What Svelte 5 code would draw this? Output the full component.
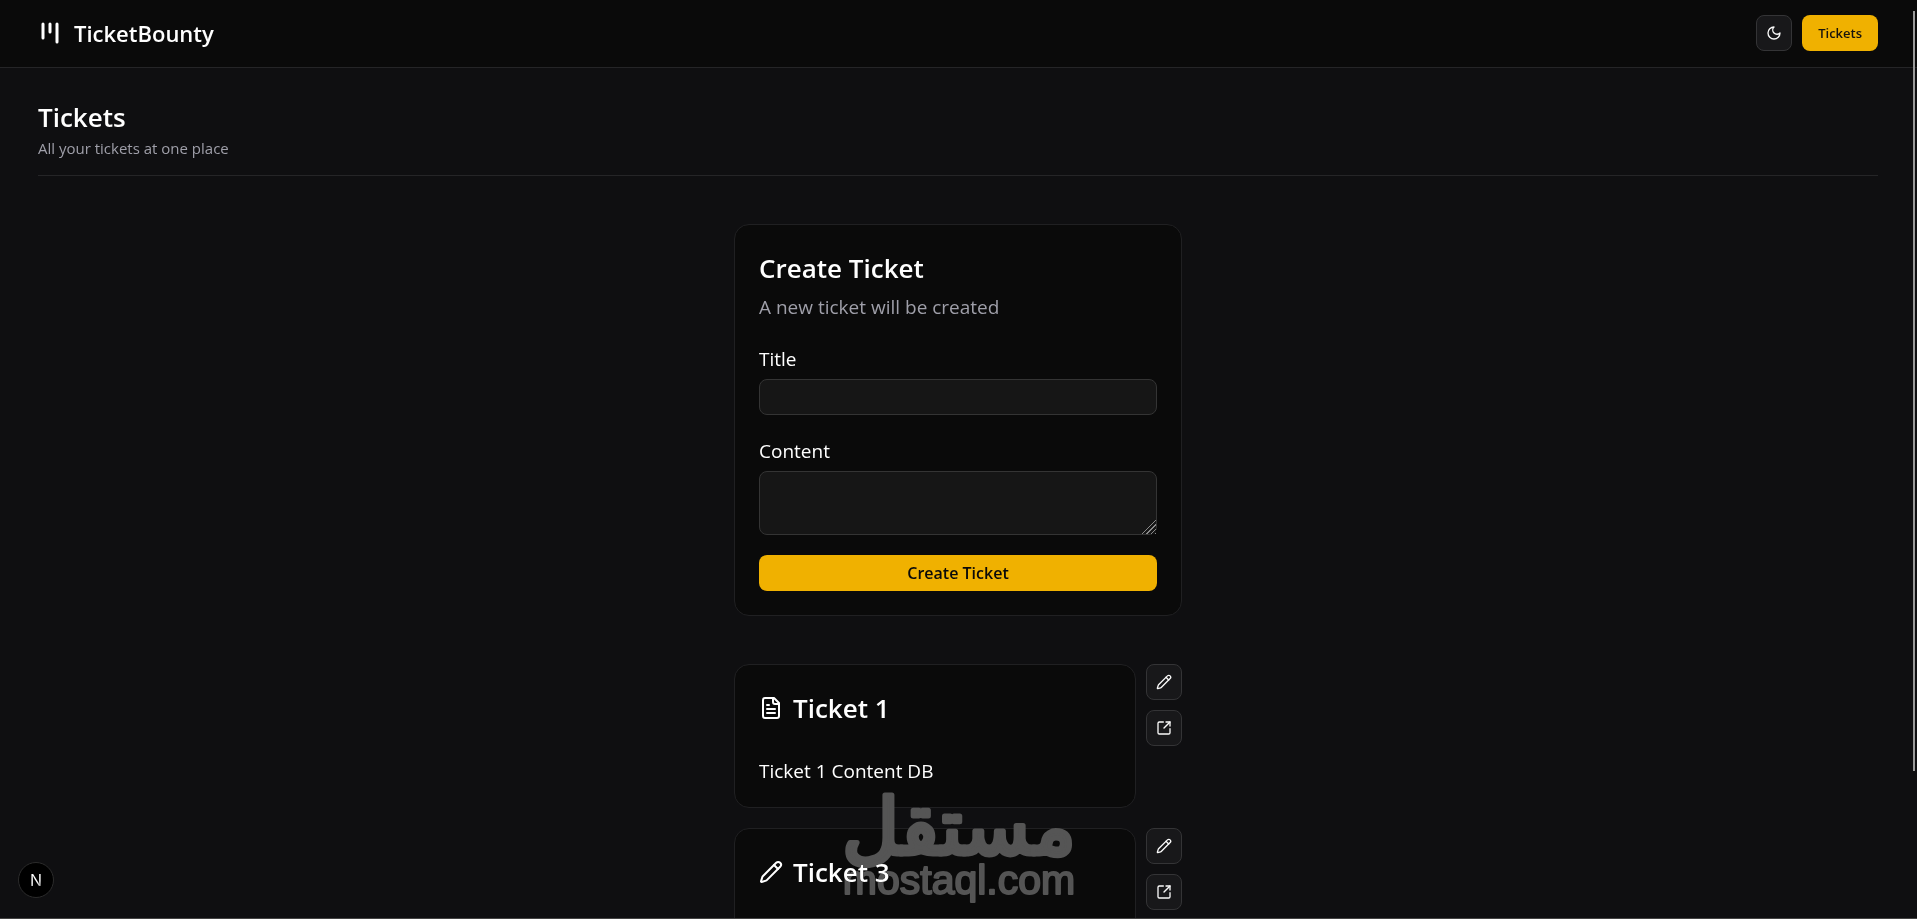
<script lang="ts">
  type Status = "OPEN" | "IN_PROGRESS";

  type Ticket = {
    id: number;
    title: string;
    content: string;
    status: Status;
  };

  const tickets: Ticket[] = [
    { id: 1, title: "Ticket 1", content: "Ticket 1 Content DB", status: "OPEN" },
    { id: 3, title: "Ticket 3", content: "", status: "IN_PROGRESS" },
  ];

  let title = $state("");
  let content = $state("");
</script>

{#snippet pencil()}
  <svg class="icon" viewBox="0 0 24 24" aria-hidden="true">
    <path
      d="M21.174 6.812a1 1 0 0 0-3.986-3.987L3.842 16.174a2 2 0 0 0-.5.83l-1.321 4.352a.5.5 0 0 0 .623.622l4.353-1.32a2 2 0 0 0 .83-.497z"
    />
    <path d="m15 5 4 4" />
  </svg>
{/snippet}

{#snippet fileText()}
  <svg class="icon" viewBox="0 0 24 24" aria-hidden="true">
    <path d="M15 2H6a2 2 0 0 0-2 2v16a2 2 0 0 0 2 2h12a2 2 0 0 0 2-2V7Z" />
    <path d="M14 2v4a2 2 0 0 0 2 2h4" />
    <path d="M10 9H8" />
    <path d="M16 13H8" />
    <path d="M16 17H8" />
  </svg>
{/snippet}

<div class="app">
  <header class="topbar">
    <a class="brand" href="/">
      <svg class="icon" viewBox="0 0 24 24" aria-hidden="true">
        <path d="M5 3v14" />
        <path d="M12 3v8" />
        <path d="M19 3v18" />
      </svg>
      <span>TicketBounty</span>
    </a>
    <nav>
      <button class="icon-button" aria-label="Toggle theme">
        <svg class="icon" viewBox="0 0 24 24" aria-hidden="true">
          <path d="M12 3a6 6 0 0 0 9 9 9 9 0 1 1-9-9Z" />
        </svg>
      </button>
      <a class="nav-link" href="/tickets">Tickets</a>
    </nav>
  </header>

  <main>
    <div class="heading">
      <h1>Tickets</h1>
      <p>All your tickets at one place</p>
    </div>

    <section class="card create-card">
      <h2>Create Ticket</h2>
      <p class="description">A new ticket will be created</p>
      <form onsubmit={(event) => event.preventDefault()}>
        <label for="title">Title</label>
        <input id="title" type="text" bind:value={title} />
        <label for="content">Content</label>
        <textarea id="content" bind:value={content}></textarea>
        <button class="primary" type="submit">Create Ticket</button>
      </form>
    </section>

    <div class="ticket-list">
      {#each tickets as ticket (ticket.id)}
        <div class="ticket-row">
          <article class="card ticket-card">
            <h3>
              {#if ticket.status === "OPEN"}
                {@render fileText()}
              {:else}
                {@render pencil()}
              {/if}
              <span>{ticket.title}</span>
            </h3>
            <p>{ticket.content}</p>
          </article>
          <div class="actions">
            <a class="icon-button" href="/tickets/{ticket.id}/edit" aria-label="Edit">
              {@render pencil()}
            </a>
            <a class="icon-button" href="/tickets/{ticket.id}" aria-label="View">
              <svg class="icon" viewBox="0 0 24 24" aria-hidden="true">
                <path d="M21 13v6a2 2 0 0 1-2 2H5a2 2 0 0 1-2-2V5a2 2 0 0 1 2-2h6" />
                <path d="m21 3-9 9" />
                <path d="M15 3h6v6" />
              </svg>
            </a>
          </div>
        </div>
      {/each}
    </div>
  </main>

  <svg class="watermark" viewBox="0 0 240 120">
    <text class="watermark-ar" x="120" y="60" lang="ar">مستقل</text>
    <text class="watermark-en" x="120" y="100">mostaql.com</text>
  </svg>

  <button class="dev-badge" aria-label="Open dev tools"><span>N</span></button>
  <div class="scroll-thumb"></div>
</div>

<style>
  :global(body) {
    background: #0f0f11;
  }

  .app {
    position: relative;
    height: 100vh;
    box-sizing: border-box;
    overflow: hidden;
    border-bottom: 1px solid #444;
    background: #0f0f11;
    color: #fff;
    font-family: "Segoe UI", "Open Sans", sans-serif;
    font-size: 19px;
    line-height: 28px;
  }

  h1,
  h2,
  h3,
  p {
    margin: 0;
  }

  h1,
  h2,
  h3 {
    font-size: 26px;
    font-weight: 600;
    line-height: 38px;
  }

  a {
    color: inherit;
    text-decoration: none;
  }

  .icon {
    width: 16px;
    height: 16px;
    flex: none;
    fill: none;
    stroke: currentColor;
    stroke-width: 2;
    stroke-linecap: round;
    stroke-linejoin: round;
  }

  .topbar {
    display: flex;
    align-items: center;
    justify-content: space-between;
    padding: 15px 39px 16px 38px;
    border-bottom: 1px solid #252527;
    background: #0a0a0a;
  }

  .brand {
    display: flex;
    align-items: center;
    gap: 12px;
    font-size: 22px;
    font-weight: 600;
    line-height: 32px;
  }

  .brand .icon {
    width: 24px;
    height: 24px;
    stroke-width: 3;
  }

  nav {
    display: flex;
    gap: 10px;
  }

  .icon-button,
  .nav-link {
    display: flex;
    align-items: center;
    justify-content: center;
    height: 36px;
    box-sizing: border-box;
    border-radius: 8px;
  }

  .icon-button {
    width: 36px;
    padding: 0;
    border: 1px solid #343436;
    background: #18181a;
    color: #fafafa;
  }

  .nav-link {
    padding: 0 16px;
    background: #f0b100;
    color: #18140c;
    font-size: 13px;
    font-weight: 600;
  }

  main {
    display: flex;
    flex-direction: column;
    padding: 30px 39px 0 38px;
  }

  .heading {
    padding-bottom: 15px;
    border-bottom: 1px solid #252527;
  }

  .heading p {
    color: #9f9fa9;
    font-size: 15px;
    line-height: 24px;
  }

  .card {
    box-sizing: border-box;
    padding: 24px;
    border: 1px solid #202022;
    border-radius: 15px;
    background: #0a0a0a;
  }

  .create-card {
    width: 100%;
    max-width: 448px;
    margin: 48px auto;
  }

  .description {
    margin-top: 6px;
    color: #9f9fa9;
  }

  form {
    display: flex;
    flex-direction: column;
    margin-top: 24px;
  }

  label {
    margin-bottom: 6px;
  }

  input,
  textarea {
    box-sizing: border-box;
    width: 100%;
    height: 36px;
    margin: 0 0 22px;
    padding: 4px 12px;
    border: 1px solid #343434;
    border-radius: 8px;
    outline: none;
    background: #161616;
    color: inherit;
    font: inherit;
  }

  textarea {
    height: 64px;
    margin-bottom: 20px;
    resize: vertical;
  }

  textarea::-webkit-resizer {
    background:
      linear-gradient(135deg, #161616 50%, transparent 50%),
      repeating-linear-gradient(135deg, #161616 0 2px, #8a8a8a 2px 3px);
  }

  .primary {
    height: 36px;
    padding: 0 16px;
    border: 0;
    border-radius: 8px;
    background: #f0b100;
    color: #0a0a0a;
    font: inherit;
    font-size: 16px;
    font-weight: 600;
  }

  .ticket-list {
    display: grid;
    gap: 20px;
    width: 100%;
    max-width: 448px;
    margin: 0 auto;
  }

  .ticket-row {
    display: flex;
    gap: 10px;
  }

  .ticket-card {
    flex: 1;
    min-height: 144px;
    padding-bottom: 22px;
  }

  .ticket-card h3 {
    display: flex;
    align-items: center;
    gap: 10px;
    margin-bottom: 30px;
  }

  .ticket-card .icon {
    width: 24px;
    height: 24px;
  }

  .actions {
    display: grid;
    gap: 10px;
    align-content: start;
  }

  .watermark {
    position: absolute;
    bottom: 4px;
    left: 50%;
    width: 240px;
    height: 120px;
    transform: translateX(-50%);
    overflow: visible;
    fill: #555;
    stroke: #555;
    stroke-linejoin: round;
    text-anchor: middle;
    mix-blend-mode: lighten;
    pointer-events: none;
  }

  .watermark-ar {
    font-family: "DejaVu Sans", sans-serif;
    font-size: 78px;
    stroke-width: 5px;
  }

  .watermark-en {
    font-family: "Liberation Sans", sans-serif;
    font-size: 41px;
    stroke-width: 2px;
  }

  .dev-badge {
    position: absolute;
    bottom: 20px;
    left: 18px;
    width: 36px;
    height: 36px;
    padding: 0;
    border: 1px solid #2c2c2c;
    border-radius: 50%;
    background: #000;
    color: #fff;
    font: 400 16px Inter, sans-serif;
  }

  .dev-badge span {
    background: linear-gradient(160deg, #fff 60%, #444);
    background-clip: text;
    color: transparent;
  }

  .scroll-thumb {
    position: absolute;
    top: 11px;
    right: 2px;
    width: 2px;
    height: calc(100% - 158px);
    background: #9a9a9a;
  }
</style>
